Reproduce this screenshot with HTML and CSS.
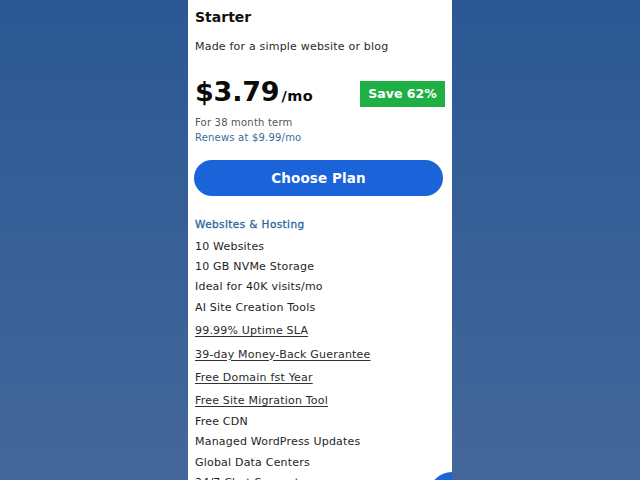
FILE: index.html
```html
<!DOCTYPE html>
<html lang="en">
<head>
<meta charset="utf-8">
<title>Starter plan</title>
<link rel="stylesheet" href="styles.css">
</head>
<body>
<main class="card">
  <h1 class="plan-name">Starter</h1>
  <p class="plan-desc">Made for a simple website or blog</p>
  <div class="price-row">
    <div class="price"><span class="amount">$3.79</span><span class="per">/mo</span></div>
    <span class="save">Save 62%</span>
  </div>
  <p class="term">For 38 month term</p>
  <p class="renew">Renews at $9.99/mo</p>
  <button class="choose">Choose Plan</button>
  <h2 class="section">Websltes &amp; Hosting</h2>
  <ul class="features">
    <li>10 Websites</li>
    <li>10 GB NVMe Storage</li>
    <li>Ideal for 40K visits/mo</li>
    <li>AI Site Creation Tools</li>
    <li class="link"><span>99.99% Uptime SLA</span></li>
    <li class="link"><span>39-day Money-Back Guerantee</span></li>
    <li class="link"><span>Free Domain fst Year</span></li>
    <li class="link"><span>Free Site Migration Tool</span></li>
    <li>Free CDN</li>
    <li>Managed WordPress Updates</li>
    <li>Global Data Centers</li>
    <li>24/7 Chat Support</li>
  </ul>
  <span class="chat" aria-label="chat"></span>
</main>
</body>
</html>
```
FILE: styles.css
```css
html, body {
  margin: 0;
  padding: 0;
  height: 480px;
  overflow: hidden;
}
body {
  background: linear-gradient(180deg, #2b5893 0%, #365f97 45%, #44679a 100%);
  font-family: "DejaVu Sans", "Liberation Sans", sans-serif;
  color: #1e1e1e;
}
.card {
  position: relative;
  width: 264px;
  height: 480px;
  margin: 0 auto;
  background: #fff;
  box-sizing: border-box;
  padding: 7px 8px 0 7px;
  overflow: hidden;
}
.plan-name {
  margin: 0;
  font-size: 14px;
  line-height: 20px;
  font-weight: bold;
  color: #111;
}
.plan-desc {
  margin: 12px 0 0;
  font-size: 11px;
  letter-spacing: 0.2px;
  line-height: 16px;
  color: #2a2a2a;
}
.price-row {
  margin-top: 22px;
  display: flex;
  justify-content: space-between;
  align-items: center;
}
.price {
  display: flex;
  align-items: baseline;
  color: #0b0b0b;
}
.amount {
  font-size: 27px;
  line-height: 30px;
  font-weight: bold;
  letter-spacing: -0.2px;
}
.per {
  font-size: 14.5px;
  font-weight: bold;
  letter-spacing: 0.5px;
  margin-left: 2px;
}
.save {
  margin-top: 4px;
  margin-right: -1px;
  width: 85px;
  height: 26px;
  line-height: 26px;
  text-align: center;
  background: #1eb044;
  color: #fff;
  font-size: 12.5px;
  font-weight: bold;
}
.term {
  margin: 8px 0 0;
  font-size: 10px;
  letter-spacing: 0.2px;
  line-height: 15px;
  color: #555;
}
.renew {
  margin: 0;
  font-size: 10px;
  letter-spacing: 0.2px;
  line-height: 15px;
  color: #3a6b96;
}
.choose {
  display: block;
  width: 249px;
  height: 36px;
  margin: 15px 0 0 -1px;
  border: 0;
  border-radius: 18px;
  background: #1b63d9;
  color: #fff;
  font-family: inherit;
  font-size: 13.5px;
  letter-spacing: 0.1px;
  font-weight: bold;
}
.section {
  margin: 20px 0 0;
  font-size: 10.5px;
  line-height: 16px;
  font-weight: normal;
  letter-spacing: 0.4px;
  -webkit-text-stroke: 0.3px #2b679c;
  color: #2b679c;
}
.features {
  list-style: none;
  margin: 4.5px 0 0;
  padding: 0;
  font-size: 11px;
  letter-spacing: 0.2px;
  color: #1e1e1e;
}
.features li {
  line-height: 20.4px;
}
.features li.link {
  margin-top: 3px;
}
.features li.link span {
  text-decoration: underline;
  text-decoration-color: #333;
  text-underline-offset: 2px;
  color: #2a2a2a;
}
.chat {
  position: absolute;
  left: 241px;
  top: 472px;
  width: 46px;
  height: 46px;
  border-radius: 50%;
  background: #1b63d9;
}
```
